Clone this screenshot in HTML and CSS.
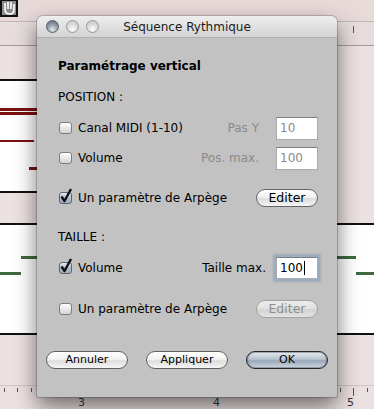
FILE: index.html
```html
<!DOCTYPE html>
<html lang="fr">

<head>
    <meta charset="UTF-8">
    <meta name="viewport" content="width=device-width, initial-scale=1.0">
    <link rel="stylesheet" href="styles.css">
</head>

<body>

    <div id="desk">
        <div class="toolbar">
            <span class="tool-icon">
                <svg width="18" height="17" viewBox="0 0 18 17">
                    <rect x="1" y="0" width="16" height="16" fill="#8e8e8e" stroke="#111" stroke-width="2"/>
                    <path d="M5 3v6M8 2v7M11 2v7M14 4v5M5 9q0 5 5 5q4 0 4-5" stroke="#fff" stroke-width="1.6" fill="none"/>
                </svg>
            </span>
        </div>
        <div class="ruler-top"><span class="mark"></span></div>
        <div class="staff staff-left"></div>
        <div class="staff staff-full"></div>
        <div class="ruler">
            <span class="tick" style="left: 4px"></span>
            <span class="tick" style="left: 17px"></span>
            <span class="tick" style="left: 31px"></span>
            <span class="tick" style="left: 340px"></span>
            <span class="tick long" style="left: 353px"></span>
            <span class="tick" style="left: 367px"></span>
            <span class="num" style="left: 78px">3</span>
            <span class="num" style="left: 213px">4</span>
            <span class="num" style="left: 347px">5</span>
        </div>

        <!-- notes on the score behind the dialog -->
        <span class="note red" style="left: 0; top: 108px; width: 37px; height: 3px"></span>
        <span class="note red" style="left: 0; top: 112px; width: 37px; height: 3px"></span>
        <span class="note red" style="left: 0; top: 140px; width: 34px; height: 2px"></span>
        <span class="note red" style="left: 29px; top: 167px; width: 8px; height: 3px"></span>
        <span class="note green" style="left: 21px; top: 256px; width: 16px"></span>
        <span class="note green" style="left: 0; top: 272px; width: 21px"></span>
        <span class="note green" style="left: 337px; top: 256px; width: 19px"></span>
        <span class="note green" style="left: 356px; top: 272px; width: 18px"></span>

        <div class="dialog">
            <div class="titlebar">
                <div class="lights">
                    <span class="light close"></span>
                    <span class="light"></span>
                    <span class="light"></span>
                </div>
                <div class="title">Séquence Rythmique</div>
                <div></div>
            </div>

            <div class="dialog-body">
                <h1 class="heading">Paramétrage vertical</h1>

                <div class="section">POSITION :</div>

                <div class="row gap-m">
                    <span class="box"></span>
                    <span class="label">Canal MIDI (1-10)</span>
                    <span class="aside">Pas Y</span>
                    <span class="field">10</span>
                </div>
                <div class="row gap-s">
                    <span class="box"></span>
                    <span class="label">Volume</span>
                    <span class="aside">Pos. max.</span>
                    <span class="field">100</span>
                </div>
                <div class="row gap-l">
                    <span class="box checked"><svg class="check" width="14" height="15" viewBox="0 0 14 15"><path d="M2.5 8.5l3 4.5l6.5-12" stroke="#111" stroke-width="2.4" fill="none" stroke-linejoin="round"/></svg></span>
                    <span class="label">Un paramètre de Arpège</span>
                    <span class="btn">Editer</span>
                </div>

                <div class="section section-gap">TAILLE :</div>

                <div class="row gap-m">
                    <span class="box checked"><svg class="check" width="14" height="15" viewBox="0 0 14 15"><path d="M2.5 8.5l3 4.5l6.5-12" stroke="#111" stroke-width="2.4" fill="none" stroke-linejoin="round"/></svg></span>
                    <span class="label">Volume</span>
                    <span class="aside active">Taille max.</span>
                    <span class="field focused">100<span class="caret"></span></span>
                </div>
                <div class="row gap-l2">
                    <span class="box"></span>
                    <span class="label">Un paramètre de Arpège</span>
                    <span class="btn disabled">Editer</span>
                </div>

                <div class="actions">
                    <span class="push">Annuler</span>
                    <span class="push">Appliquer</span>
                    <span class="push default">OK</span>
                </div>
            </div>
        </div>
    </div>

</body>

</html>
```

FILE: styles.css
```css
* {
    margin: 0;
    padding: 0;
    box-sizing: border-box;
}

body {
    margin: 0;
    font-family: "DejaVu Sans", sans-serif;
    font-size: 12px;
}

#desk {
    position: relative;
    width: 374px;
    height: 409px;
    overflow: hidden;
    background: #ece1e1;
}

.toolbar {
    height: 22px;
    background: #e9dada;
    border-bottom: 1px solid #c4b5b5;
}

.tool-icon svg {
    display: block;
}

.ruler-top {
    position: relative;
    height: 24px;
    background: #e7dddd;
    border-bottom: 1px solid #a99b9b;
}

.ruler-top .mark {
    position: absolute;
    left: 353px;
    top: 4px;
    width: 1px;
    height: 7px;
    background: #555;
}

.staff {
    background: #fff;
    border-top: 2px solid #111;
    border-bottom: 2px solid #111;
}

.staff-left {
    width: 200px;
    height: 114px;
    margin-top: 33px;
}

.staff-full {
    height: 112px;
    margin-top: 30px;
}

.ruler {
    position: relative;
    height: 25px;
    margin-top: 50px;
    border-top: 1px solid #d2c6c6;
}

.tick {
    position: absolute;
    top: 2px;
    width: 1px;
    height: 4px;
    background: #555;
}

.tick.long {
    height: 8px;
}

.num {
    position: absolute;
    top: 10px;
    font-size: 11px;
    line-height: 13px;
    color: #333;
}

.note {
    position: absolute;
}

.note.red {
    background: #7c1111;
}

.note.green {
    height: 3px;
    background: #3e6a3e;
}

/* dialog window */

.dialog {
    position: absolute;
    left: 37px;
    top: 16px;
    width: 300px;
    background: #c2c2c2;
    border-radius: 6px 6px 2px 2px;
    box-shadow: 0 9px 22px rgba(0, 0, 0, 0.55), 0 0 0 1px rgba(0, 0, 0, 0.18);
}

.titlebar {
    display: grid;
    grid-template-columns: 1fr auto 1fr;
    align-items: center;
    height: 22px;
    background: linear-gradient(#eeeeee, #d3d3d3);
    border-bottom: 1px solid #b0b0b0;
    border-radius: 6px 6px 0 0;
}

.lights {
    display: flex;
    gap: 7px;
    padding-left: 9px;
}

.light {
    width: 13px;
    height: 13px;
    border-radius: 50%;
    border: 1px solid #9a9a9a;
    background: radial-gradient(circle at 50% 75%, #ffffff 0%, #dedede 45%, #c4c4c4 100%);
}

.light.close {
    border-color: #585e66;
    background: radial-gradient(circle at 50% 78%, #e6ebf0 0%, #98a2ae 45%, #5d6670 100%);
}

.title {
    font-size: 12px;
    color: #1b1b1b;
}

.dialog-body {
    padding: 20px 19px 28px 21px;
}

.heading {
    font-size: 12px;
    font-weight: bold;
    line-height: 16px;
}

.section {
    line-height: 16px;
    margin-top: 15px;
}

.section-gap {
    margin-top: 19px;
}

.row {
    display: flex;
    align-items: center;
    height: 24px;
    padding-left: 1px;
}

.gap-s {
    margin-top: 6px;
}

.gap-m {
    margin-top: 11px;
}

.gap-l {
    margin-top: 16px;
}

.gap-l2 {
    margin-top: 17px;
}

.box {
    position: relative;
    width: 13px;
    height: 12px;
    margin-right: 6px;
    border: 1px solid #7d7d7d;
    border-radius: 3px;
    background: linear-gradient(#ffffff, #e8e8e8 50%, #d4d4d4);
}

.box.checked {
    background: linear-gradient(#e4e9ef, #b3bfcc 50%, #9eacbc);
    border-color: #5d646d;
}

.check {
    position: absolute;
    left: -1px;
    top: -5px;
}

.label {
    flex: 1;
    color: #000;
}

.aside {
    color: #8a8a8a;
    margin-right: 17px;
}

.aside.active {
    color: #000;
    margin-right: 10px;
}

.field {
    width: 42px;
    height: 23px;
    padding: 3px 0 0 3px;
    background: #fff;
    border: 1px solid #ababab;
    border-top-color: #7e7e7e;
    color: #8a8a8a;
}

.field.focused {
    height: 22px;
    color: #000;
    box-shadow: 0 0 0 2px #9cacbf, 0 0 2px 3px rgba(120, 140, 165, 0.4);
}

.caret {
    display: inline-block;
    width: 1px;
    height: 14px;
    margin-left: 1px;
    vertical-align: -3px;
    background: #000;
}

.btn {
    width: 62px;
    height: 18px;
    border: 1px solid #666;
    border-radius: 9px;
    background: linear-gradient(#ffffff, #f1f1f1 45%, #dcdcdc 55%, #f6f6f6);
    font-size: 12.5px;
    line-height: 16px;
    text-align: center;
}

.btn.disabled {
    border-color: #a3a3a3;
    color: #8f8f8f;
    background: linear-gradient(#ececec, #e2e2e2 45%, #d2d2d2 55%, #e4e4e4);
}

.actions {
    display: flex;
    gap: 18px;
    margin: 30px -10px 0 -12px;
}

.push {
    flex: none;
    width: 82px;
    height: 18px;
    border: 1px solid #616161;
    border-radius: 9px;
    background: linear-gradient(#ffffff, #f2f2f2 45%, #dddddd 55%, #f6f6f6);
    font-size: 11px;
    line-height: 16px;
    text-align: center;
}

.push.default {
    border-color: #23272d;
    background: linear-gradient(#e6ebf1, #b8c3cf 45%, #9aa8b8 55%, #cfd8e2);
    box-shadow: inset 0 0 0 1px rgba(40, 46, 54, 0.35);
}
```
